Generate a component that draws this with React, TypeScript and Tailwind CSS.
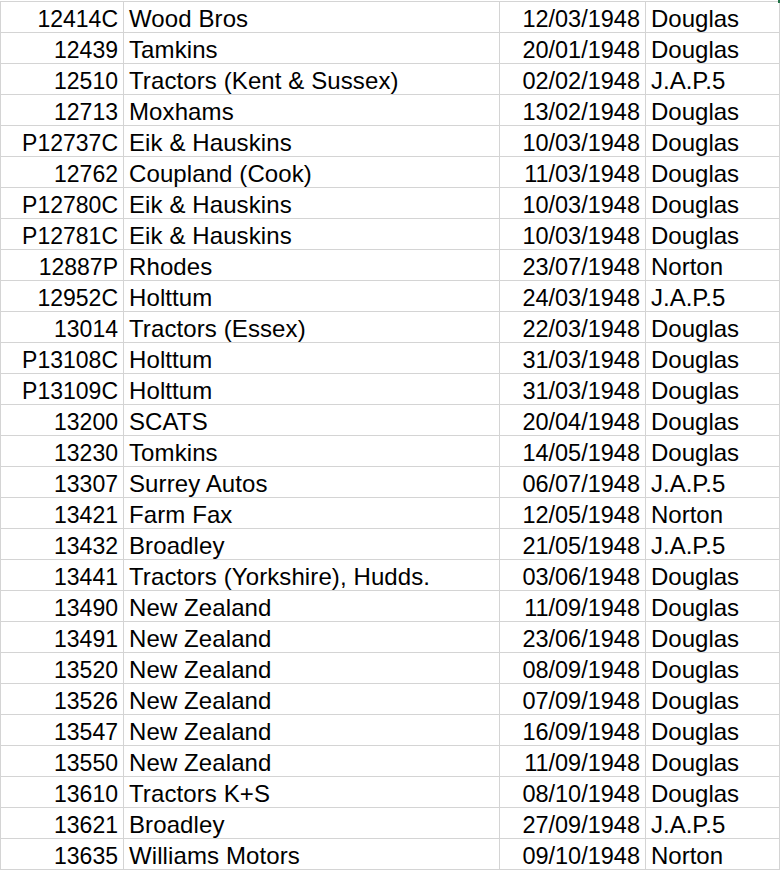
import React from "react";

const rows: [string, string, string, string][] = [
  ["12414C", "Wood Bros", "12/03/1948", "Douglas"],
  ["12439", "Tamkins", "20/01/1948", "Douglas"],
  ["12510", "Tractors (Kent & Sussex)", "02/02/1948", "J.A.P.5"],
  ["12713", "Moxhams", "13/02/1948", "Douglas"],
  ["P12737C", "Eik & Hauskins", "10/03/1948", "Douglas"],
  ["12762", "Coupland (Cook)", "11/03/1948", "Douglas"],
  ["P12780C", "Eik & Hauskins", "10/03/1948", "Douglas"],
  ["P12781C", "Eik & Hauskins", "10/03/1948", "Douglas"],
  ["12887P", "Rhodes", "23/07/1948", "Norton"],
  ["12952C", "Holttum", "24/03/1948", "J.A.P.5"],
  ["13014", "Tractors (Essex)", "22/03/1948", "Douglas"],
  ["P13108C", "Holttum", "31/03/1948", "Douglas"],
  ["P13109C", "Holttum", "31/03/1948", "Douglas"],
  ["13200", "SCATS", "20/04/1948", "Douglas"],
  ["13230", "Tomkins", "14/05/1948", "Douglas"],
  ["13307", "Surrey Autos", "06/07/1948", "J.A.P.5"],
  ["13421", "Farm Fax", "12/05/1948", "Norton"],
  ["13432", "Broadley", "21/05/1948", "J.A.P.5"],
  ["13441", "Tractors (Yorkshire), Hudds.", "03/06/1948", "Douglas"],
  ["13490", "New Zealand", "11/09/1948", "Douglas"],
  ["13491", "New Zealand", "23/06/1948", "Douglas"],
  ["13520", "New Zealand", "08/09/1948", "Douglas"],
  ["13526", "New Zealand", "07/09/1948", "Douglas"],
  ["13547", "New Zealand", "16/09/1948", "Douglas"],
  ["13550", "New Zealand", "11/09/1948", "Douglas"],
  ["13610", "Tractors K+S", "08/10/1948", "Douglas"],
  ["13621", "Broadley", "27/09/1948", "J.A.P.5"],
  ["13635", "Williams Motors", "09/10/1948", "Norton"],
];

const cell =
  "h-[31px] border-r border-b border-[#d4d4d4] pt-[3px] leading-[28px] whitespace-nowrap overflow-hidden";

export default function App() {
  return (
    <div className="relative w-[780px] h-[871px] bg-white overflow-hidden pt-px">
      <div
        className="grid grid-cols-[123px_376px_146px_134px] border-t border-l border-[#d4d4d4] text-[24px] text-black"
        style={{ fontFamily: '"Liberation Sans", Arial, sans-serif' }}
      >
        {rows.map((r, i) => (
          <React.Fragment key={i}>
            <div className={`${cell} text-right pr-[5px] text-[23px]`}>{r[0]}</div>
            <div className={`${cell} pl-[5px] tracking-[0.1px]`}>{r[1]}</div>
            <div className={`${cell} text-right pr-[5px] text-[23.5px]`}>{r[2]}</div>
            <div className={`${cell} pl-[5px]`}>{r[3]}</div>
          </React.Fragment>
        ))}
      </div>
      <div className="absolute right-0 top-0 w-[2px] h-[3px] bg-[#217346]" />
    </div>
  );
}
